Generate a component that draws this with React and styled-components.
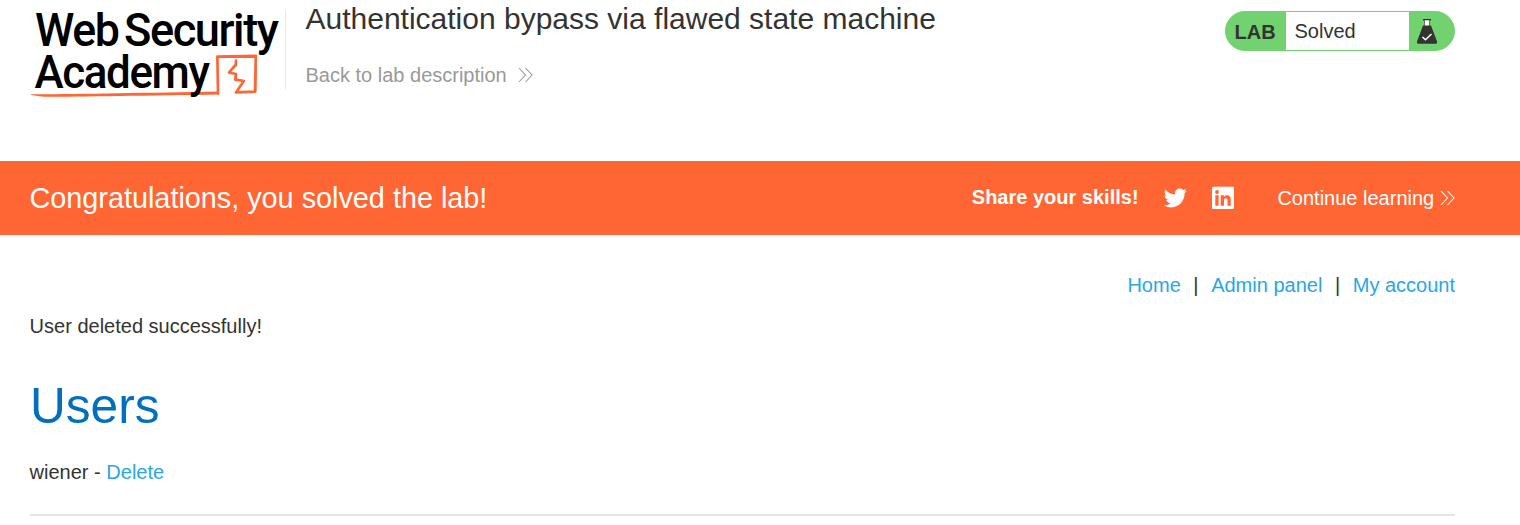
import React from 'react';
import styled, { createGlobalStyle } from 'styled-components';

const GlobalStyle = createGlobalStyle`
  * { box-sizing: border-box; }
  body {
    margin: 0;
    background: #fff;
    color: #333332;
    font: 20px/24px "Liberation Sans", Arial, sans-serif;
    overflow: hidden;
  }
`;

const Header = styled.header`
  display: flex;
  align-items: flex-start;
  height: 161px;
  padding: 0 65px 0 30px;
`;

const Logo = styled.svg`
  display: block;
  width: 250px;
  height: 100px;
  flex: none;
  overflow: visible;
`;

const LogoText = styled.text`
  font-family: Roboto, sans-serif;
  font-size: 46.5px;
  font-weight: 500;
  letter-spacing: -1.5px;
  fill: #000;
`;

const TitleBlock = styled.div`
  flex: 1;
  height: 79px;
  margin: 10px 0 0 5px;
  padding-left: 19.5px;
  border-left: 1px solid #e6e6e6;
`;

const Title = styled.h2`
  margin: -9px 0 0;
  font-size: 30px;
  font-weight: 400;
  line-height: 36px;
  white-space: nowrap;
`;

const BackLink = styled.a`
  display: flex;
  align-items: center;
  gap: 11px;
  margin-top: 26px;
  color: #999;
`;

const Chevrons = styled.svg`
  display: block;
  width: 15px;
  height: 16px;
  fill: none;
  stroke: currentColor;
  stroke-width: 1.1;
`;

const Badge = styled.div`
  display: flex;
  width: 230px;
  height: 40px;
  margin-top: 11px;
  overflow: hidden;
  border: 1px solid #72d26f;
  border-radius: 20px;
  background: #72d26f;
  line-height: 38px;
`;

const BadgeLabel = styled.strong`
  width: 60px;
  padding: 1px 0 0 8.5px;
`;

const BadgeStatus = styled.span`
  width: 123px;
  padding-left: 8.5px;
  background: #fff;
`;

const Flask = styled.svg`
  display: block;
  width: 22px;
  height: 26px;
  margin: 7px 0 0 8px;
`;

const Banner = styled.section`
  display: flex;
  align-items: center;
  height: 74px;
  padding: 0 65px 0 29.5px;
  background: #ff6633;
  color: #fff;
`;

const BannerMessage = styled.h3`
  flex: 1;
  margin: 0;
  font-size: 28.8px;
  font-weight: 400;
  line-height: 34px;
`;

const ShareLabel = styled.strong`
  margin: 0 24px 2px 0;
`;

const SocialIcon = styled.svg`
  display: block;
  width: 24px;
  height: 24px;
  margin-right: ${({ $gap }) => $gap}px;
  fill: #fff;
`;

const ContinueLink = styled.a`
  display: flex;
  align-items: center;
  gap: 5.8px;
`;

const Main = styled.main`
  padding: 38px 65px 0 30px;
`;

const Nav = styled.nav`
  display: flex;
  justify-content: flex-end;
  gap: 12.6px;
`;

const Link = styled.a`
  color: #29a7e5;
`;

const Notice = styled.p`
  margin: 17px 0 0 -0.4px;
`;

const Heading = styled.h1`
  margin: 38px 0 0;
  color: #0070bc;
  font-size: 49.6px;
  font-weight: 400;
  line-height: 60px;
`;

const UserRow = styled.div`
  margin: 24px 0 0 -0.4px;
`;

const Rule = styled.hr`
  height: 2px;
  margin: 30px 0 0;
  border: 0;
  background: #e4e4e4;
`;

const DoubleChevron = () => (
  <Chevrons viewBox="0 0 15 16">
    <path d="M1 1l6.5 7L1 15M7.5 1l6.5 7-6.5 7" />
  </Chevrons>
);

export default function App() {
  return (
    <>
      <GlobalStyle />
      <Header>
        <Logo viewBox="30 0 250 100">
          <g fill="none" stroke="#ff6633" strokeLinejoin="round" strokeLinecap="round">
            <path strokeWidth="2.7" d="M218 93.500L217.400 56.500L255.800 55.800L255 91.700L236 92.400L243.800 81L235.200 79.700L236 74L229 72.500L235.700 64.500L236 60.500" />
            <path strokeWidth="1.200" d="M218.600 57.500L256.400 57.200L255.800 91.500" />
            <path strokeWidth="1.200" d="M229.500 72L236.400 65.500M236 79L243.500 80.500" />
          </g>
          <path fill="#ff6633" d="M31 94.300C70 94.500 145 92.800 219 91.600L219 94.400C150 95.500 80 96.600 45 96.800C40 96.700 36 95.500 31 95Z" />
          <LogoText x="35" y="46.400" textLength="83.500" lengthAdjust="spacingAndGlyphs">Web</LogoText>
          <LogoText x="124" y="46.400" textLength="153.500" lengthAdjust="spacingAndGlyphs">Security</LogoText>
          <LogoText x="34.500" y="87.600" textLength="174" lengthAdjust="spacingAndGlyphs">Academy</LogoText>
        </Logo>
        <TitleBlock>
          <Title>Authentication bypass via flawed state machine</Title>
          <BackLink>Back to lab description <DoubleChevron /></BackLink>
        </TitleBlock>
        <Badge>
          <BadgeLabel>LAB</BadgeLabel>
          <BadgeStatus>Solved</BadgeStatus>
          <Flask viewBox="0 0 22 26">
            <path fill="#333332" d="M6 0h8v1.500h-1V6.500h1L20 22.500q.600 2.300-1.500 2.300H1.500Q-.600 24.800 0 22.500L6 6.500h1V1.500H6z" />
            <path fill="#fff" d="M7.700 1.300h4.600V6.500H7.700z" />
            <path fill="none" stroke="#fff" strokeWidth="1.500" d="M5.500 18l3 2.800 6-5.800" />
          </Flask>
        </Badge>
      </Header>
      <Banner>
        <BannerMessage>Congratulations, you solved the lab!</BannerMessage>
        <ShareLabel>Share your skills!</ShareLabel>
        <SocialIcon viewBox="0.300 0.300 23.400 23.400" $gap={24.7}>
          <path d="M23.643 4.937c-.835.37-1.732.62-2.675.733.962-.576 1.700-1.490 2.048-2.578-.900.534-1.897.922-2.958 1.130-.850-.904-2.060-1.470-3.400-1.470-2.572 0-4.658 2.086-4.658 4.660 0 .364.042.718.120 1.060-3.873-.195-7.304-2.050-9.602-4.868-.400.690-.630 1.490-.630 2.342 0 1.616.823 3.043 2.072 3.878-.764-.025-1.482-.234-2.110-.583v.060c0 2.257 1.605 4.140 3.737 4.568-.392.106-.803.162-1.227.162-.300 0-.593-.028-.877-.082.593 1.850 2.313 3.198 4.352 3.234-1.595 1.250-3.604 1.995-5.786 1.995-.376 0-.747-.022-1.112-.065 2.062 1.323 4.510 2.093 7.140 2.093 8.570 0 13.255-7.098 13.255-13.254 0-.200-.005-.402-.014-.602.910-.658 1.700-1.477 2.323-2.410z" />
        </SocialIcon>
        <SocialIcon viewBox="0 0 24 24" $gap={42.2}>
          <path fillRule="evenodd" d="M2.300 .800h19.400q1.300 0 1.300 1.300v19.600q0 1.300-1.300 1.300H2.300Q1 23 1 21.700V2.100Q1 .800 2.300 .800zM4.300 9.300v10.400h3.300V9.300zM6 4.100a1.900 1.900 0 1 0 0 3.800 1.900 1.900 0 1 0 0-3.800zM9.700 9.300v10.400H13v-5.200c0-3.100 3.500-3.200 3.500 0v5.200h3.300v-6.200c0-5-4.900-5.400-6.900-2.700V9.300z" />
        </SocialIcon>
        <ContinueLink>Continue learning <DoubleChevron /></ContinueLink>
      </Banner>
      <Main>
        <Nav>
          <Link>Home</Link><span>|</span><Link>Admin panel</Link><span>|</span><Link>My account</Link>
        </Nav>
        <Notice>User deleted successfully!</Notice>
        <Heading>Users</Heading>
        <UserRow>wiener - <Link>Delete</Link></UserRow>
        <Rule />
      </Main>
    </>
  );
}
